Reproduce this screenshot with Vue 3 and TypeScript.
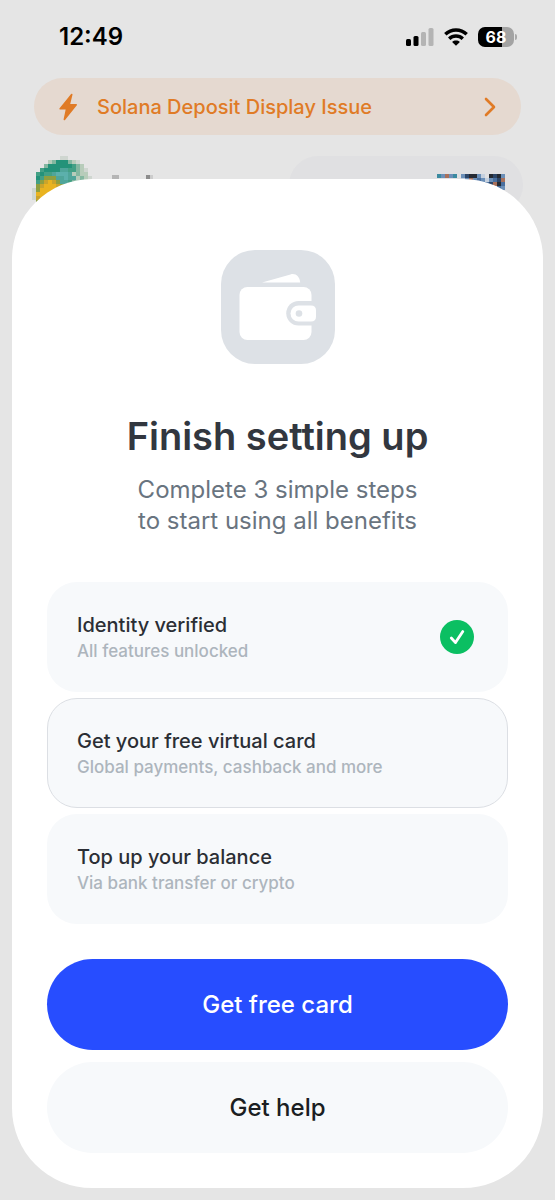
<script setup lang="ts">
interface Step {
  id: string
  title: string
  note: string
  done: boolean
  current: boolean
}

interface Tile {
  x: number
  y: number
  fill: string
}

const steps: Step[] = [
  { id: 'identity', title: 'Identity verified', note: 'All features unlocked', done: true, current: false },
  { id: 'card', title: 'Get your free virtual card', note: 'Global payments, cashback and more', done: false, current: true },
  { id: 'topup', title: 'Top up your balance', note: 'Via bank transfer or crypto', done: false, current: false },
]

const toTiles = (rows: string[], palette: Record<string, string>): Tile[] =>
  rows.flatMap((row, y) =>
    [...row].flatMap((key, x) => (palette[key] ? [{ x: x * 4, y: y * 4, fill: palette[key] }] : [])),
  )

const avatarTiles = toTiles(
  [
    '.......ss.......',
    '....lmGGGmls....',
    '...mGGGGGGgml...',
    '..gGGGGttggmls..',
    '.gGggtTTTtlmll..',
    '.GgooottTttlmls.',
    '.goyYyottgmmlsS.',
    '.oyYYYyoomml....',
    'soYYYYyo........',
    'sYYYyy..........',
    'syYy............',
    '.o..............',
  ],
  {
    s: '#cfd6d0', m: '#83b7a0', g: '#43a085', G: '#249279', t: '#4fa59a', T: '#5cb0ac',
    l: '#b7ccba', o: '#8f9f3f', y: '#cba42b', Y: '#e9b320', S: '#b9bab8',
  },
)

const cardTiles = toTiles(
  [
    'tbobt.bnkkbs.knkbs',
    '......sbobabsbanobs',
    '............anokab',
    '...............abb',
  ],
  { t: '#3b8aa0', b: '#6b8fb8', o: '#a9705a', n: '#2d4668', k: '#252a33', a: '#496f9f', s: '#c5d0de' },
)
</script>

<template>
  <div class="screen">
    <header class="status">
      <time class="clock">12:49</time>
      <div class="indicators">
        <svg class="signal" viewBox="0 0 28 18" aria-label="Signal">
          <rect x="0" y="11" width="5" height="7" rx="1.5" />
          <rect x="7.5" y="8" width="5" height="10" rx="1.5" />
          <rect class="faint" x="15" y="4" width="5" height="14" rx="1.5" />
          <rect class="faint" x="22.5" y="0" width="5" height="18" rx="1.5" />
        </svg>
        <svg class="wifi" viewBox="0 0 24 18" aria-label="Wi-Fi">
          <path d="M1.300 6.300C7.300.5 16.700.5 22.700 6.300" />
          <path d="M5.200 10.700c3.800-3.700 9.800-3.700 13.600 0" />
          <path class="dot" d="M12 17.800l-3.900-3.900c2.200-1.800 5.600-1.800 7.800 0z" />
        </svg>
        <div class="battery" aria-label="Battery 68 percent">
          <span class="charge">68</span>
          <i class="cap"></i>
        </div>
      </div>
    </header>

    <a class="banner" href="#deposit-issue">
      <svg class="bolt" viewBox="0 0 18 28" aria-hidden="true">
        <path d="M12.700 1.500L1.200 15.800h6.400L5.400 26.500 17.200 11.800h-7z" />
      </svg>
      <span class="banner-text">Solana Deposit Display Issue</span>
      <svg class="chevron" viewBox="0 0 12 20" aria-hidden="true">
        <path d="M2 2l8 8-8 8" />
      </svg>
    </a>

    <div class="account" aria-hidden="true">
      <svg class="avatar" viewBox="0 0 128 48">
        <rect v-for="(t, i) in avatarTiles" :key="i" :x="t.x" :y="t.y" width="4" height="4" :fill="t.fill" />
        <rect x="80" y="19" width="7" height="4" fill="#b5b5b5" />
        <rect x="114" y="19" width="4" height="4" fill="#8c8c8c" />
        <rect x="118" y="19" width="3" height="4" fill="#cccccc" />
      </svg>
      <div class="card-pill">
        <svg class="card-art" viewBox="0 0 68 16">
          <rect v-for="(t, i) in cardTiles" :key="i" :x="t.x" :y="t.y" width="4" height="4" :fill="t.fill" />
        </svg>
      </div>
    </div>

    <main class="sheet">
      <svg class="wallet" viewBox="0 0 114 114" aria-hidden="true">
        <rect class="tile" width="114" height="114" rx="34" />
        <path d="M41 32.600L69.500 24.400c5-1.400 9 1.600 9.700 8.200z" />
        <rect x="18.500" y="37" width="72" height="53" rx="8" />
        <path class="tile" d="M96 51H77.500a12 12 0 0 0 0 24.500H96z" />
        <path d="M77.500 55.500H90q5 0 5 5v6q0 5-5 5H77.500a8 8 0 0 1 0-16z" />
        <circle class="tile" cx="78" cy="63.500" r="3.300" />
      </svg>

      <h1>Finish setting up</h1>
      <p class="lead">Complete 3 simple steps<br />to start using all benefits</p>

      <ul class="steps">
        <li v-for="step in steps" :key="step.id" class="step" :class="{ current: step.current }">
          <div class="step-copy">
            <h2>{{ step.title }}</h2>
            <p>{{ step.note }}</p>
          </div>
          <svg v-if="step.done" class="check" viewBox="0 0 34 34" aria-label="Done">
            <circle cx="17" cy="17" r="17" />
            <path d="M11.300 18l4.200 4.600L22.800 11.600" />
          </svg>
        </li>
      </ul>

      <div class="actions">
        <button class="primary" type="button">Get free card</button>
        <button class="secondary" type="button">Get help</button>
      </div>
    </main>
  </div>
</template>

<style>
body {
  margin: 0;
  background: #e5e5e5;
}
</style>

<style scoped>
* {
  box-sizing: border-box;
}

.screen {
  position: relative;
  min-height: 100vh;
  background: #e5e5e5;
  font-family: Inter, Roboto, sans-serif;
}

.status {
  display: flex;
  align-items: center;
  justify-content: space-between;
  height: 78px;
  padding: 0 37px 4px 59px;
}

.clock {
  font-size: 24px;
  font-weight: 600;
  line-height: 28px;
  color: #000;
}

.indicators {
  display: flex;
  align-items: center;
  gap: 10px;
}

.signal {
  width: 28px;
  height: 18px;
}

.signal .faint {
  fill: #b4b4b4;
}

.wifi {
  width: 24px;
  height: 18px;
  fill: none;
  stroke: #000;
  stroke-width: 3.4;
}

.wifi .dot {
  fill: #000;
  stroke: none;
}

.battery {
  position: relative;
  width: 36px;
  height: 20px;
  margin-right: 4px;
  border-radius: 7px;
  background: linear-gradient(to right, #000 68%, #a3a3a3 68%);
}

.charge {
  display: block;
  font-size: 16px;
  font-weight: 700;
  line-height: 20px;
  text-align: center;
  color: #fff;
}

.cap {
  position: absolute;
  top: 7px;
  right: -3px;
  width: 2px;
  height: 6px;
  border-radius: 0 2px 2px 0;
  background: #a9a9a9;
}

.banner {
  display: flex;
  align-items: center;
  height: 57px;
  margin: 0 34px;
  padding: 0 25px;
  border-radius: 29px;
  background: #e5d9d0;
  color: #e07b26;
  text-decoration: none;
}

.bolt {
  width: 18px;
  height: 28px;
  margin-right: 20px;
  fill: currentColor;
  stroke: currentColor;
  stroke-width: 1.6;
  stroke-linejoin: round;
}

.banner-text {
  flex: 1;
  font-size: 20px;
  font-weight: 500;
  line-height: 28px;
}

.chevron {
  width: 12px;
  height: 20px;
  fill: none;
  stroke: currentColor;
  stroke-width: 2.6;
  stroke-linecap: round;
  stroke-linejoin: round;
}

.account {
  display: flex;
  justify-content: space-between;
  margin: 21px 32px 0;
}

.avatar {
  width: 128px;
  height: 48px;
}

.card-pill {
  width: 234px;
  height: 58px;
  padding: 18px 0 0 148px;
  border-radius: 29px;
  background: #e0e0e2;
}

.card-art {
  display: block;
  width: 68px;
  height: 16px;
}

.sheet {
  position: absolute;
  right: 12px;
  bottom: 12px;
  left: 12px;
  padding: 71px 35px 35px;
  border-radius: 80px;
  background: #fff;
  text-align: center;
}

.wallet {
  display: block;
  width: 114px;
  height: 114px;
  margin: 0 auto;
  fill: #fff;
}

.wallet .tile {
  fill: #dde1e6;
}

h1 {
  margin: 48px 0 0;
  font-size: 38px;
  font-weight: 600;
  line-height: 48px;
  color: #32373f;
}

.lead {
  margin: 14px 0 0;
  font-size: 24px;
  line-height: 31px;
  color: #69747f;
}

.steps {
  display: grid;
  gap: 6px;
  margin: 46px 0 0;
  padding: 0;
  list-style: none;
}

.step {
  display: flex;
  align-items: center;
  justify-content: space-between;
  height: 110px;
  padding: 0 33px 0 29px;
  border: 1px solid transparent;
  border-radius: 30px;
  background: #f7f9fb;
  text-align: left;
}

.step.current {
  border-color: #dcdfe4;
}

.step h2 {
  margin: 0;
  font-size: 20px;
  font-weight: 500;
  line-height: 27px;
  color: #2b2e34;
}

.step p {
  margin: 0;
  font-size: 17px;
  font-weight: 500;
  line-height: 24px;
  color: #adb5bd;
}

.check {
  width: 34px;
  height: 34px;
  fill: #0bbf62;
}

.check path {
  fill: none;
  stroke: #fff;
  stroke-width: 2.8;
  stroke-linecap: round;
  stroke-linejoin: round;
}

.actions {
  display: grid;
  gap: 12px;
  margin-top: 35px;
}

button {
  height: 91px;
  padding: 0;
  border: 0;
  border-radius: 46px;
  font-family: inherit;
  font-size: 24px;
  font-weight: 500;
  line-height: 30px;
}

.primary {
  background: #274dff;
  color: #fff;
}

.secondary {
  background: #f7f9fb;
  color: #1b1e22;
}
</style>
